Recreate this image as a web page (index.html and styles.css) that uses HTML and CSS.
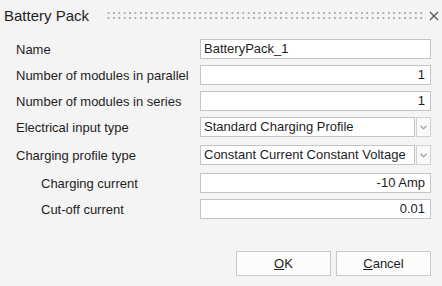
FILE: index.html
```html
<!DOCTYPE html>
<html>
<head>
<meta charset="utf-8">
<link rel="stylesheet" href="styles.css">
</head>
<body>
<div class="dialog">
  <div class="titlebar">
    <span class="title">Battery Pack</span>
    <span class="grip"></span>
    <svg class="close" width="10" height="10" viewBox="0 0 10 10"><path d="M1 1 L9 9 M9 1 L1 9" stroke="#555" stroke-width="1.3" fill="none"/></svg>
  </div>
  <div class="form">
    <div class="row">
      <label class="lbl">Name</label>
      <div class="field">BatteryPack_1</div>
    </div>
    <div class="row">
      <label class="lbl">Number of modules in parallel</label>
      <div class="field num">1</div>
    </div>
    <div class="row">
      <label class="lbl">Number of modules in series</label>
      <div class="field num">1</div>
    </div>
    <div class="row combo-row">
      <label class="lbl">Electrical input type</label>
      <div class="combo">
        <div class="field combo-text">Standard Charging Profile</div>
        <div class="combo-btn"><svg width="7" height="5" viewBox="0 0 7 5"><path d="M0.5 0.8 L3.5 3.8 L6.5 0.8" stroke="#a8a8a8" stroke-width="1.4" fill="none"/></svg></div>
      </div>
    </div>
    <div class="row combo-row">
      <label class="lbl">Charging profile type</label>
      <div class="combo">
        <div class="field combo-text">Constant Current Constant Voltage</div>
        <div class="combo-btn"><svg width="7" height="5" viewBox="0 0 7 5"><path d="M0.5 0.8 L3.5 3.8 L6.5 0.8" stroke="#a8a8a8" stroke-width="1.4" fill="none"/></svg></div>
      </div>
    </div>
    <div class="row">
      <label class="lbl sub">Charging current</label>
      <div class="field num">-10 Amp</div>
    </div>
    <div class="row">
      <label class="lbl sub">Cut-off current</label>
      <div class="field num">0.01</div>
    </div>
  </div>
  <div class="buttons">
    <button class="btn"><u>O</u>K</button>
    <button class="btn"><u>C</u>ancel</button>
  </div>
</div>
</body>
</html>
```

FILE: styles.css
```css
html, body {
  margin: 0;
  padding: 0;
  background: #f4f4f4;
}
body {
  font-family: "Liberation Sans", Arial, sans-serif;
  font-size: 13px;
  color: #1e1e1e;
}
.dialog {
  width: 442px;
  height: 286px;
  display: flex;
  flex-direction: column;
}
.titlebar {
  height: 30px;
  display: flex;
  align-items: center;
  padding: 0 3px 0 4px;
  box-sizing: border-box;
}
.title {
  font-size: 15px;
  color: #1e1e1e;
  margin-top: 1px;
}
.grip {
  flex: 1;
  height: 7px;
  margin: 1px 3px 0 15px;
  background-image:
    linear-gradient(to right, #f4f4f4 0, #f4f4f4 3.4px, transparent 3.4px),
    linear-gradient(to bottom, #acacac 0, #acacac 2px, transparent 2px, transparent 5px, #acacac 5px, #acacac 7px, transparent 7px);
  background-size: 5.4px 7px, 100% 7px;
  background-repeat: repeat-x, no-repeat;
  background-position: 0 0, 0 0;
}
.close {
  display: block;
  margin-top: 1px;
}
.form {
  display: flex;
  flex-direction: column;
  gap: 6px;
  padding: 9px 11px 0 16px;
}
.row {
  display: flex;
  align-items: center;
  height: 20px;
}
.combo-row {
  margin-bottom: 2px;
}
.lbl {
  width: 184px;
  flex: none;
  white-space: nowrap;
}
.lbl.sub {
  padding-left: 25px;
  box-sizing: border-box;
}
.field {
  flex: 1;
  height: 20px;
  box-sizing: border-box;
  border: 1px solid #c4c4c4;
  background: #ffffff;
  padding: 0 5px 0 3px;
  line-height: 18px;
  white-space: nowrap;
  overflow: hidden;
}
.field.num {
  text-align: right;
}
.combo {
  flex: 1;
  display: flex;
  gap: 1px;
  height: 20px;
}
.combo-btn {
  width: 15px;
  flex: none;
  box-sizing: border-box;
  border: 1px solid #d0d0d0;
  background: #f9f9f9;
  display: flex;
  align-items: center;
  justify-content: center;
}
.buttons {
  display: flex;
  justify-content: flex-end;
  gap: 5px;
  padding: 0 11px 0 0;
  margin-top: 32px;
}
.btn {
  width: 95px;
  height: 25px;
  box-sizing: border-box;
  border: 1px solid #c8c8c8;
  border-radius: 0;
  background: #fcfcfc;
  font-family: "Liberation Sans", Arial, sans-serif;
  font-size: 13px;
  color: #1e1e1e;
  padding: 0;
}
```
